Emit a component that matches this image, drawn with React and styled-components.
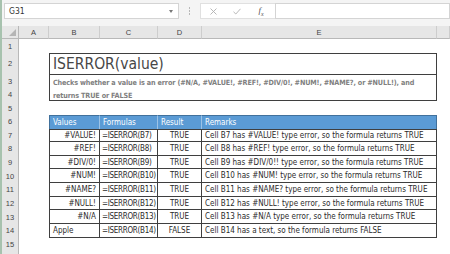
import React from 'react';
import styled, { createGlobalStyle } from 'styled-components';

const GlobalStyle = createGlobalStyle`
  html, body { margin: 0; padding: 0; background: #fff; }
  body {
    font-family: "Liberation Sans Narrow", "DejaVu Sans Condensed", "Liberation Sans", sans-serif;
  }
`;

// F is wider than the window, so its letter sits off screen
const COLS = ['A', 'B', 'C', 'D', 'E', ''];

const ROWS = [
  { value: '#VALUE!', formula: '=ISERROR(B7)', result: 'TRUE', remark: 'Cell B7 has #VALUE! type error, so the formula returns TRUE' },
  { value: '#REF!', formula: '=ISERROR(B8)', result: 'TRUE', remark: 'Cell B8 has #REF! type error, so the formula returns TRUE' },
  { value: '#DIV/0!', formula: '=ISERROR(B9)', result: 'TRUE', remark: 'Cell B9 has #DIV/0!! type error, so the formula returns TRUE' },
  { value: '#NUM!', formula: '=ISERROR(B10)', result: 'TRUE', remark: 'Cell B10 has #NUM! type error, so the formula returns TRUE' },
  { value: '#NAME?', formula: '=ISERROR(B11)', result: 'TRUE', remark: 'Cell B11 has #NAME? type error, so the formula returns TRUE' },
  { value: '#NULL!', formula: '=ISERROR(B12)', result: 'TRUE', remark: 'Cell B12 has #NULL! type error, so the formula returns TRUE' },
  { value: '#N/A', formula: '=ISERROR(B13)', result: 'TRUE', remark: 'Cell B13 has #N/A type error, so the formula returns TRUE' },
  { value: 'Apple', formula: '=ISERROR(B14)', result: 'FALSE', remark: 'Cell B14 has a text, so the formula returns FALSE', text: true },
];

const Window = styled.div`
  width: 450px;
  height: 254px;
  overflow: hidden;
  box-sizing: border-box;
  border-left: 2px solid #a7c2ae;
  background: #fff;
`;

const FormulaBar = styled.div`
  display: flex;
  align-items: flex-start;
  height: 26px;
  box-sizing: border-box;
  padding: 3px 0 0 2px;
  background: #f4f4f4;
`;

const NameBox = styled.div`
  display: flex;
  align-items: center;
  justify-content: space-between;
  width: 175px;
  height: 16px;
  box-sizing: border-box;
  padding: 0 5px 0 4px;
  border: 1px solid #d4d4d4;
  background: #fff;
  font-size: 8.5px;
  color: #333;
`;

const Caret = styled.span`
  width: 0;
  height: 0;
  border-left: 2.5px solid transparent;
  border-right: 2.5px solid transparent;
  border-top: 3px solid #777;
`;

const Dots = styled.div`
  display: flex;
  flex-direction: column;
  align-items: center;
  justify-content: center;
  gap: 1.5px;
  width: 21px;
  height: 16px;
  span {
    width: 1.5px;
    height: 1.5px;
    background: #b8b8b8;
  }
`;

const Buttons = styled.div`
  display: flex;
  align-items: center;
  width: 75px;
  height: 16px;
  box-sizing: border-box;
  border: 1px solid #e0e0e0;
  border-right: none;
  background: #fff;
`;

const IconSlot = styled.div`
  display: flex;
  align-items: center;
  justify-content: center;
  width: 24px;
  height: 100%;
  color: ${(p) => p.$color || '#b0b0b0'};
`;

const Fx = styled.span`
  font-family: "Liberation Serif", serif;
  font-style: italic;
  font-size: 9px;
  color: #555;
  sub { font-size: 6px; }
`;

const Input = styled.div`
  flex: 1;
  height: 16px;
  box-sizing: border-box;
  border: 1px solid #d4d4d4;
  background: #fff;
`;

const Sheet = styled.div`
  display: grid;
  grid-template-columns: 17px 30px 51px 58px 44px 235px 1fr;
  grid-template-rows: 13px 14px 21px 14px 13px 14px 13.5px repeat(10, 13.65px);
`;

const Corner = styled.div`
  grid-row: 1;
  grid-column: 1;
  position: relative;
  background: #e6e6e6;
  border-right: 1px solid #b8b8b8;
  border-bottom: 1px solid #b8b8b8;
  svg { position: absolute; right: 2px; bottom: 2px; }
`;

const ColHead = styled.div`
  grid-row: 1;
  grid-column: ${(p) => p.$col};
  display: flex;
  align-items: center;
  justify-content: center;
  background: #e6e6e6;
  border-right: 1px solid #cdcdcd;
  border-bottom: 1px solid #b8b8b8;
  font-family: "Liberation Sans", sans-serif;
  font-size: 7.5px;
  color: #444;
`;

const RowHead = styled.div`
  grid-row: ${(p) => p.$row + 1};
  grid-column: 1;
  display: flex;
  align-items: center;
  justify-content: center;
  background: #e6e6e6;
  border-right: 1px solid #b8b8b8;
  font-family: "Liberation Sans", sans-serif;
  font-size: 7.5px;
  color: #444;
`;

const TitleBox = styled.div`
  grid-row: 3 / 6;
  grid-column: 3 / 7;
  display: flex;
  flex-direction: column;
  box-sizing: border-box;
  border: 1px solid #3f3f3f;
`;

const Title = styled.div`
  height: 20px;
  border-bottom: 1px solid #3f3f3f;
  padding-left: 3px;
  font-size: 15.5px;
  line-height: 20px;
  color: #474747;
`;

const Desc = styled.div`
  padding: 1px 3px 0;
  font-size: 7.2px;
  font-weight: bold;
  letter-spacing: -0.14px;
  line-height: 13px;
  color: #7f7f7f;
`;

const Table = styled.div`
  grid-row: 7 / 16;
  grid-column: 3 / 7;
  display: grid;
  grid-template-columns: 51px 58px 44px 1fr;
  grid-template-rows: 13.5px repeat(8, 13.65px);
`;

const HeadCell = styled.div`
  display: flex;
  align-items: center;
  padding-left: 3px;
  box-sizing: border-box;
  background: #5b9bd5;
  border-top: 1px solid #41719c;
  border-right: 1px solid ${(p) => (p.$last ? '#41719c' : '#9dc3e6')};
  border-left: ${(p) => (p.$first ? '1px solid #41719c' : 'none')};
  font-size: 8px;
  color: #fff;
`;

const Cell = styled.div`
  display: flex;
  align-items: center;
  justify-content: ${(p) => (p.$align === 'right' ? 'flex-end' : p.$align === 'center' ? 'center' : 'flex-start')};
  padding: ${(p) => (p.$tight ? '0 0 0 2px' : '0 3px')};
  box-sizing: border-box;
  border-right: 1px solid #3f3f3f;
  border-bottom: 1px solid #3f3f3f;
  border-left: ${(p) => (p.$first ? '1px solid #3f3f3f' : 'none')};
  border-top: ${(p) => (p.$top ? '1px solid #3f3f3f' : 'none')};
  font-size: 8px;
  letter-spacing: ${(p) => (p.$tight ? '-0.3px' : 'normal')};
  color: #2b2b2b;
  white-space: nowrap;
  overflow: hidden;
`;

export default function App() {
  return (
    <Window>
      <GlobalStyle />
      <FormulaBar>
        <NameBox>
          <span>G31</span>
          <Caret />
        </NameBox>
        <Dots>
          <span />
          <span />
          <span />
        </Dots>
        <Buttons>
          <IconSlot>
            <svg width="7" height="7" viewBox="0 0 7 7">
              <path d="M0.5 0.5 L6.5 6.5 M6.5 0.5 L0.5 6.5" stroke="currentColor" strokeWidth="0.9" />
            </svg>
          </IconSlot>
          <IconSlot>
            <svg width="8" height="7" viewBox="0 0 8 7">
              <path d="M0.5 3.8 L2.8 6 L7.5 0.8" stroke="currentColor" strokeWidth="0.9" fill="none" />
            </svg>
          </IconSlot>
          <IconSlot $color="#555">
            <Fx>f<sub>x</sub></Fx>
          </IconSlot>
        </Buttons>
        <Input />
      </FormulaBar>

      <Sheet>
        <Corner>
          <svg width="7" height="7" viewBox="0 0 7 7">
            <polygon points="7,0 7,7 0,7" fill="#b5b5b5" />
          </svg>
        </Corner>
        {COLS.map((c, i) => (
          <ColHead key={i} $col={i + 2}>{c}</ColHead>
        ))}
        {Array.from({ length: 16 }, (_, i) => (
          <RowHead key={i} $row={i + 1}>{i < 15 ? i + 1 : ''}</RowHead>
        ))}

        <TitleBox>
          <Title>ISERROR(value)</Title>
          <Desc>
            Checks whether a value is an error (#N/A, #VALUE!, #REF!, #DIV/0!, #NUM!, #NAME?, or #NULL!), and
            returns TRUE or FALSE
          </Desc>
        </TitleBox>

        <Table>
          <HeadCell $first>Values</HeadCell>
          <HeadCell>Formulas</HeadCell>
          <HeadCell>Result</HeadCell>
          <HeadCell $last>Remarks</HeadCell>
          {ROWS.map((r, i) => (
            <React.Fragment key={r.formula}>
              <Cell $first $top={i === 0} $align={r.text ? 'left' : 'right'}>{r.value}</Cell>
              <Cell $top={i === 0} $tight>{r.formula}</Cell>
              <Cell $top={i === 0} $align="center">{r.result}</Cell>
              <Cell $top={i === 0}>{r.remark}</Cell>
            </React.Fragment>
          ))}
        </Table>
      </Sheet>
    </Window>
  );
}
